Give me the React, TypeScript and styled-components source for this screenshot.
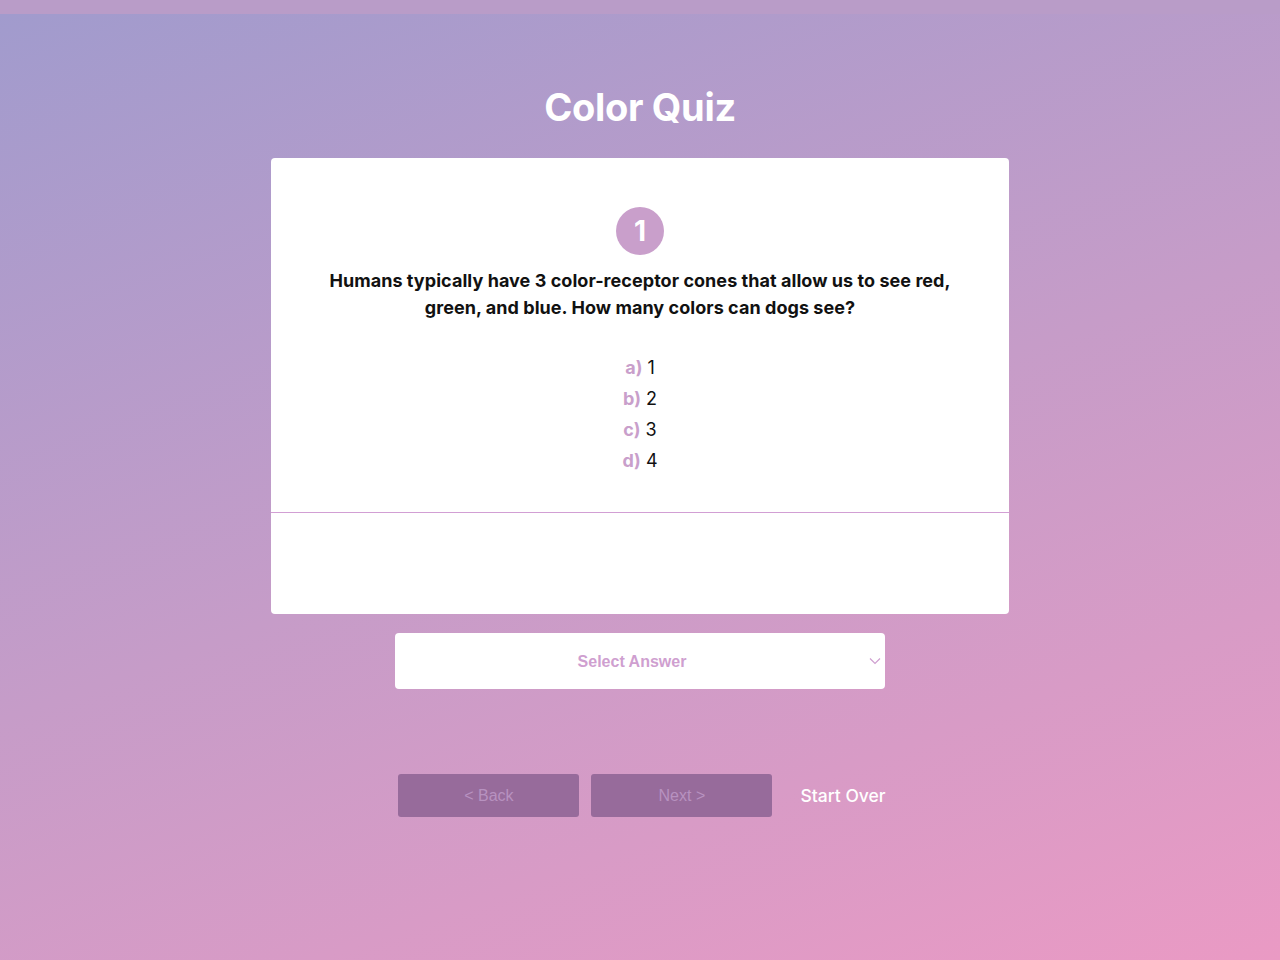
import React from "react";
import styled, { createGlobalStyle } from "styled-components";

const Global = createGlobalStyle`
  html { background: #b99cc8; }
  body { margin: 0; }
  * { box-sizing: border-box; }
`;

const Page = styled.div`
  margin-top: 14px;
  min-height: 946px;
  background: linear-gradient(160deg, #a19bcd 0%, #c69cc8 50%, #ea9ac4 100%);
  display: flex;
  flex-direction: column;
  align-items: center;
  font-family: Inter, "Noto Sans", sans-serif;
  padding-top: 70px;
`;

const Title = styled.h1`
  margin: 0;
  color: #fff;
  font-size: 38px;
  font-weight: 700;
  line-height: 46px;
  letter-spacing: -0.3px;
`;

const Card = styled.section`
  margin-top: 28px;
  width: 738px;
  background: #fff;
  border-radius: 4px;
  display: flex;
  flex-direction: column;
`;

const CardBody = styled.div`
  display: flex;
  flex-direction: column;
  align-items: center;
  padding: 49px 30px 36px;
`;

const Divider = styled.hr`
  margin: 0;
  border: none;
  height: 1px;
  background: #d29fd4;
`;

const Badge = styled.div`
  width: 48px;
  height: 48px;
  border-radius: 50%;
  background: #c99fcb;
  color: #fff;
  font-size: 28px;
  font-weight: 700;
  display: flex;
  align-items: center;
  justify-content: center;
`;

const Question = styled.p`
  margin: 12px 0 0;
  text-align: center;
  font-size: 18px;
  font-weight: 700;
  line-height: 27px;
  color: #111;
  letter-spacing: 0.05px;
`;

const Options = styled.ol`
  list-style: none;
  margin: 31px 0 0;
  padding: 0;
  display: flex;
  flex-direction: column;
  align-items: center;
`;

const Option = styled.li`
  font-size: 18px;
  line-height: 31px;
  color: #111;
`;

const Letter = styled.span`
  color: #c99fcb;
  font-weight: 700;
  margin-right: 5px;
`;

const CardFooter = styled.div`
  height: 101px;
`;

const SelectBox = styled.div`
  position: relative;
  margin-top: 19px;
  width: 490px;
  height: 56px;
`;

const Select = styled.select`
  appearance: none;
  width: 100%;
  height: 100%;
  border: none;
  border-radius: 4px;
  background: #fff;
  color: #cf9fd0;
  font-family: "Liberation Sans", Arial, sans-serif;
  font-weight: 700;
  font-size: 16px;
  text-align: center;
  text-align-last: center;
  padding-right: 16px;
`;

const Chevron = styled.svg`
  position: absolute;
  right: 4px;
  top: 24px;
  pointer-events: none;
`;

const Actions = styled.div`
  margin-top: 85px;
  margin-left: 4px;
  display: flex;
  align-items: center;
  gap: 12px;
`;

const NavButton = styled.button`
  width: 181px;
  height: 43px;
  border: none;
  border-radius: 3px;
  background: #976b9b;
  color: #b792c0;
  font-family: "Liberation Sans", Arial, sans-serif;
  font-size: 16px;
`;

const TextButton = styled.button`
  margin-left: 16px;
  border: none;
  background: none;
  padding: 0;
  color: #fff;
  font-family: Inter, "Noto Sans", sans-serif;
  font-size: 17.5px;
  font-weight: 500;
`;

const options = [
  ["a)", "1"],
  ["b)", "2"],
  ["c)", "3"],
  ["d)", "4"],
];

export default function App() {
  return (
    <>
      <Global />
      <Page>
        <Title>Color Quiz</Title>
        <Card>
          <CardBody>
            <Badge>1</Badge>
            <Question>
              Humans typically have 3 color-receptor cones that allow us to see red,
              <br />
              green, and blue. How many colors can dogs see?
            </Question>
            <Options>
              {options.map(([l, v]) => (
                <Option key={l}>
                  <Letter>{l}</Letter>
                  {v}
                </Option>
              ))}
            </Options>
          </CardBody>
          <Divider />
          <CardFooter />
        </Card>
        <SelectBox>
          <Select defaultValue="">
            <option value="" disabled>
              Select Answer
            </option>
            <option value="1">1</option>
            <option value="2">2</option>
            <option value="3">3</option>
            <option value="4">4</option>
          </Select>
          <Chevron width="12" height="8" viewBox="0 0 12 8">
            <path d="M1 1.5 L6 6.5 L11 1.5" fill="none" stroke="#cf9fd0" strokeWidth="1.2" />
          </Chevron>
        </SelectBox>
        <Actions>
          <NavButton disabled>&lt; Back</NavButton>
          <NavButton disabled>Next &gt;</NavButton>
          <TextButton>Start Over</TextButton>
        </Actions>
      </Page>
    </>
  );
}
